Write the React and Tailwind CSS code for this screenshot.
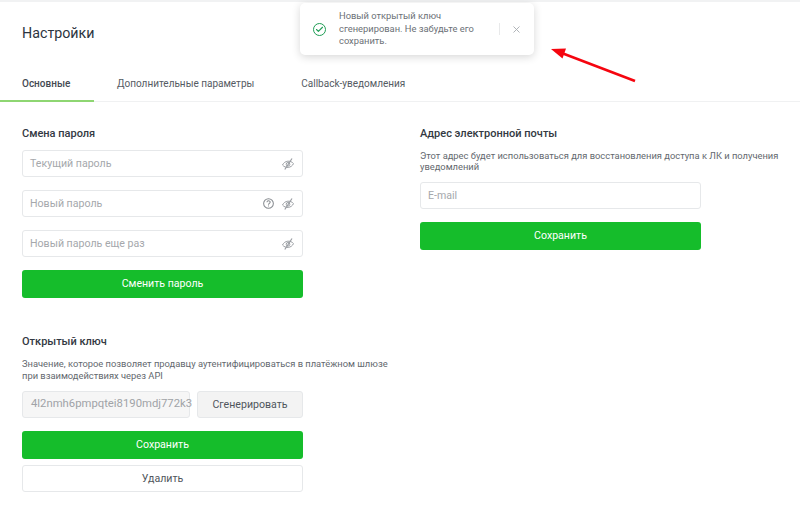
import { Check, X } from 'lucide-react'

const EyeOff = () => (
  <svg width="12" height="12" viewBox="0 0 12 12" fill="none" stroke="#9a9ea3" strokeWidth="1">
    <path d="M.5 7C1.600 4.800 3.500 3.400 5.800 3.200s4.300.7 5.700 2.400C10.400 7.900 8.500 9.200 6.200 9.400S1.900 8.700.5 7z" />
    <circle cx="6" cy="6.300" r="1.800" />
    <path d="M10 .5 2.800 11.500" strokeWidth="1.200" />
  </svg>
)

const Help = () => (
  <svg width="11" height="11" viewBox="0 0 12 12" fill="none" stroke="#85898e" strokeWidth="1.100">
    <circle cx="6" cy="6" r="5.300" />
    <path d="M4.300 4.700c0-2.100 3.500-2.100 3.500-.1 0 1.300-1.800 1.300-1.800 2.700" />
    <path d="M6 8.200v1" />
  </svg>
)

function PasswordField({ placeholder, help }) {
  return (
    <div className="flex h-[27px] items-center rounded-[3px] border border-[#e6e8ea] pl-[7px] pr-[8px] text-[10.600px] text-[#a5a8ac]">
      <span className="flex-1">{placeholder}</span>
      <div className="flex items-center gap-[8px]">
        {help && <Help />}
        <EyeOff />
      </div>
    </div>
  )
}

function GreenButton({ children }) {
  return (
    <button className="flex h-[28px] w-full items-center justify-center rounded-[3px] bg-[#15bd2b] text-[10.600px] text-white">
      {children}
    </button>
  )
}

export default function App() {
  return (
    <div className="relative h-[530px] w-[800px] overflow-hidden bg-white font-['Roboto',sans-serif]">
      <div className="h-[2px] bg-[#f1f2f3]" />

      <h1 className="px-[22px] pt-[21px] text-[14.250px] leading-[20px] text-[#2c3440]">Настройки</h1>

      {/* Tabs */}
      <div className="mt-[21px] flex h-[38px] border-b border-[#f0f1f2] text-[10px] text-[#555b63]">
        <div className="h-[38px] w-[94px] border-b-2 border-[#8ed672] pl-[22px] pt-[12px] font-medium text-[#444a52]">Основные</div>
        <div className="pl-[23px] pt-[12px]">Дополнительные параметры</div>
        <div className="pl-[47px] pt-[12px]">Callback-уведомления</div>
      </div>

      <div className="flex pl-[22px] pt-[25px]">
        {/* Left column */}
        <div className="w-[281px]">
          <h2 className="text-[11px] font-medium leading-[14px] text-[#333942]">Смена пароля</h2>
          <div className="mt-[9px] flex flex-col gap-[13px]">
            <PasswordField placeholder="Текущий пароль" />
            <PasswordField placeholder="Новый пароль" help />
            <PasswordField placeholder="Новый пароль еще раз" />
            <GreenButton>Сменить пароль</GreenButton>
          </div>

          <h2 className="mt-[37px] text-[11px] font-medium leading-[14px] text-[#333942]">Открытый ключ</h2>
          <p className="mt-[9px] w-[380px] text-[9.350px] leading-[12px] text-[#63686e]">
            Значение, которое позволяет продавцу аутентифицироваться в платёжном шлюзе при взаимодействиях через API
          </p>
          <div className="mt-[9px] flex gap-[7px]">
            <div className="flex h-[27px] w-[168px] items-center rounded-[3px] border border-[#e6e8ea] bg-[#f6f6f6] pl-[8px] text-[11.300px] whitespace-nowrap text-[#a0a3a7]">
              4l2nmh6pmpqtei8190mdj772k3
            </div>
            <button className="h-[27px] flex-1 rounded-[3px] border border-[#e6e8ea] bg-[#f3f3f3] text-[10.600px] text-[#50565c]">
              Сгенерировать
            </button>
          </div>
          <div className="mt-[13px]">
            <GreenButton>Сохранить</GreenButton>
          </div>
          <button className="mt-[6px] h-[27px] w-full rounded-[3px] border border-[#e6e8ea] bg-white text-[10.600px] text-[#50565c]">
            Удалить
          </button>
        </div>

        {/* Right column */}
        <div className="ml-[117px] w-[281px]">
          <h2 className="text-[11px] font-medium leading-[14px] text-[#333942]">Адрес электронной почты</h2>
          <p className="mt-[9px] w-[360px] text-[9.350px] leading-[11px] text-[#63686e]">
            Этот адрес будет использоваться для восстановления доступа к ЛК и получения уведомлений
          </p>
          <div className="mt-[10px] flex h-[27px] items-center rounded-[3px] border border-[#e6e8ea] pl-[7px] text-[10.600px] text-[#a5a8ac]">
            E-mail
          </div>
          <div className="mt-[13px]">
            <GreenButton>Сохранить</GreenButton>
          </div>
        </div>
      </div>

      {/* Toast */}
      <div className="absolute left-[300px] top-[3px] flex h-[52px] w-[234px] items-center rounded-[5px] bg-white shadow-[0_2px_8px_rgba(0,0,0,0.16)]">
        <div className="ml-[13px] flex h-[13px] w-[13px] items-center justify-center rounded-full border-[1.500px] border-[#1f9d55] text-[#1f9d55]">
          <Check size={9} strokeWidth={3} />
        </div>
        <p className="ml-[13px] w-[150px] text-[9.350px] leading-[12.500px] text-[#6b7076]">
          Новый открытый ключ сгенерирован. Не забудьте его сохранить.
        </p>
        <div className="ml-[10px] h-[12px] w-px bg-[#e8e9ea]" />
        <X size={11} className="ml-[11px] text-[#a9adb1]" />
      </div>

      {/* Arrow annotation */}
      <svg className="absolute left-[550px] top-[45px]" width="90" height="40" viewBox="0 0 90 40" fill="none">
        <path d="M85 36 13 8.500" stroke="#f5050f" strokeWidth="2.500" />
        <path d="M1 4l15-.5-3.500 10z" fill="#f5050f" />
      </svg>
    </div>
  )
}
